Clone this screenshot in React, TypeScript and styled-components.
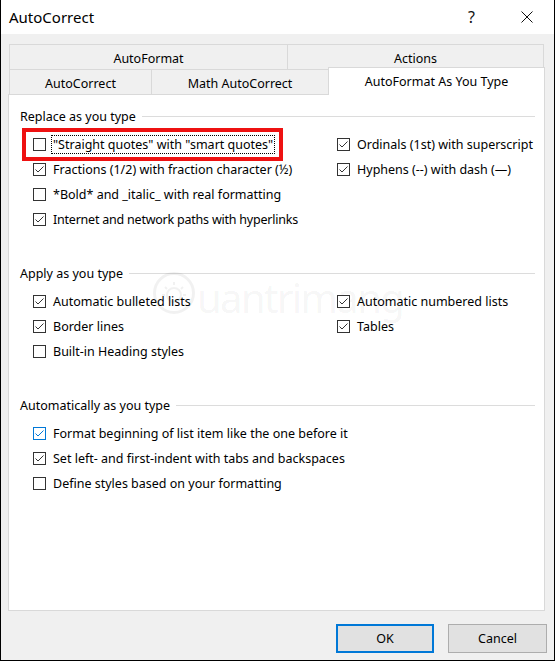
import React from 'react';
import styled, { createGlobalStyle } from 'styled-components';

const Global = createGlobalStyle`
  html, body { margin: 0; padding: 0; background: #fff; }
  * { box-sizing: border-box; }
`;

const FONT = `"Noto Sans", "Segoe UI", sans-serif`;

const Window = styled.div`
  width: 555px;
  height: 661px;
  border: 1px solid #000;
  border-top: none;
  display: flex;
  flex-direction: column;
  font-family: ${FONT};
  color: #000;
  background: #f0f0f0;
`;

const TitleBar = styled.div`
  height: 34px;
  flex: none;
  background: #fff;
  display: flex;
  align-items: center;
  padding-left: 8px;
`;

const Title = styled.div`
  flex: 1;
  font-size: 15px;
  margin-top: -1px;
`;

const TitleButton = styled.div`
  width: 55px;
  height: 34px;
  display: flex;
  align-items: center;
  justify-content: center;
  font-size: 16px;
  color: #111;
`;

const Body = styled.div`
  flex: 1;
  display: flex;
  flex-direction: column;
  padding: 10px 8px 0 7px;
`;

const TabRow = styled.div`
  display: flex;
  height: 25px;
  margin: 0 1px;
`;

const Tab = styled.div<{ $w: number; $active?: boolean; $last?: boolean }>`
  width: ${(p) => p.$w}px;
  flex: none;
  display: flex;
  align-items: center;
  justify-content: center;
  font-size: 12.5px;
  border: 1px solid #d9d9d9;
  border-bottom: none;
  border-right: ${(p) => (p.$last ? '1px solid #d9d9d9' : 'none')};
  background: ${(p) => (p.$active ? '#fff' : '#f0f0f0')};
  ${(p) =>
    p.$active
      ? `height: 28px; margin-top: -2px; margin-right: -1px; position: relative; z-index: 1; padding-bottom: 1px;`
      : `height: 25px; padding-top: 2px;`}
`;

const Panel = styled.div`
  position: relative;
  width: 537px;
  height: 517px;
  flex: none;
  background: #fff;
  border: 1px solid #d9d9d9;
  padding: 11px 9px 0 11px;
`;

const Section = styled.div<{ $gap: number }>`
  margin-top: ${(p) => p.$gap}px;
`;

const Legend = styled.div`
  height: 20px;
  display: flex;
  align-items: center;
  gap: 6px;
  font-size: 12.5px;
`;

const LegendLine = styled.div`
  flex: 1;
  height: 1px;
  background: #dcdcdc;
`;

const Columns = styled.div`
  display: grid;
  grid-template-columns: 304px 1fr;
  padding-left: 13px;
  margin-top: 6px;
`;

const Column = styled.div`
  display: flex;
  flex-direction: column;
`;

const Row = styled.div`
  position: relative;
  height: 25px;
  display: flex;
  align-items: center;
  gap: 7px;
  font-size: 12.5px;
  white-space: nowrap;
`;

const Box = styled.div<{ $focus?: boolean }>`
  width: 13px;
  height: 13px;
  flex: none;
  border: 1px solid ${(p) => (p.$focus ? '#0078d7' : '#333')};
  background: #fff;
  display: flex;
  align-items: center;
  justify-content: center;
`;

const Label = styled.span<{ $dotted?: boolean; $tight?: boolean }>`
  ${(p) => (p.$dotted ? 'outline: 1px dotted #000; outline-offset: 0; padding: 0 1px; margin-left: -1px;' : '')}
  ${(p) => (p.$tight ? 'letter-spacing: -0.22px;' : '')}
`;

const Highlight = styled.div`
  position: absolute;
  left: -11px;
  top: -4px;
  width: 261px;
  height: 33px;
  border: 4px solid #ee1111;
  pointer-events: none;
`;

const Watermark = styled.div`
  position: absolute;
  left: 143px;
  top: 176px;
  display: flex;
  align-items: flex-end;
  gap: 1px;
  color: rgba(0, 0, 0, 0.055);
  font-family: "Noto Sans", sans-serif;
  font-size: 40px;
  line-height: 40px;
  letter-spacing: -1.6px;
  pointer-events: none;
  user-select: none;
`;

const WatermarkText = styled.span`
  margin-bottom: -3px;
`;

const Footer = styled.div`
  flex: 1;
  display: flex;
  justify-content: flex-end;
  align-items: flex-start;
  gap: 14px;
  padding-top: 13px;
  margin-right: -1px;
`;

const Button = styled.div<{ $default?: boolean }>`
  width: ${(p) => (p.$default ? 98 : 99)}px;
  height: 29px;
  display: flex;
  align-items: center;
  justify-content: center;
  background: #e1e1e1;
  border: ${(p) => (p.$default ? '2px solid #0078d7' : '1px solid #adadad')};
  font-size: 12.5px;
`;

const Check = ({ color }: { color: string }) => (
  <svg width="11" height="11" viewBox="0 0 11 11">
    <polyline points="1.5,5.5 4,8 9.5,2.5" fill="none" stroke={color} strokeWidth="1" />
  </svg>
);

type Item = {
  text: string;
  checked?: boolean;
  focus?: boolean;
  dotted?: boolean;
  highlight?: boolean;
  tight?: boolean;
};

const CheckRow = ({ item }: { item: Item }) => (
  <Row>
    <Box $focus={item.focus}>{item.checked && <Check color={item.focus ? '#0078d7' : '#333'} />}</Box>
    <Label $dotted={item.dotted} $tight={item.tight}>
      {item.text}
    </Label>
    {item.highlight && <Highlight />}
  </Row>
);

const sections: { title: string; gap: number; left: Item[]; right: Item[] }[] = [
  {
    title: 'Replace as you type',
    gap: 0,
    left: [
      { text: '"Straight quotes" with "smart quotes"', dotted: true, highlight: true },
      { text: 'Fractions (1/2) with fraction character (½)', checked: true },
      { text: '*Bold* and _italic_ with real formatting' },
      { text: 'Internet and network paths with hyperlinks', checked: true, tight: true },
    ],
    right: [
      { text: 'Ordinals (1st) with superscript', checked: true },
      { text: 'Hyphens (--) with dash (—)', checked: true },
    ],
  },
  {
    title: 'Apply as you type',
    gap: 31,
    left: [
      { text: 'Automatic bulleted lists', checked: true },
      { text: 'Border lines', checked: true },
      { text: 'Built-in Heading styles' },
    ],
    right: [
      { text: 'Automatic numbered lists', checked: true },
      { text: 'Tables', checked: true },
    ],
  },
  {
    title: 'Automatically as you type',
    gap: 31,
    left: [
      { text: 'Format beginning of list item like the one before it', checked: true, focus: true },
      { text: 'Set left- and first-indent with tabs and backspaces', checked: true },
      { text: 'Define styles based on your formatting' },
    ],
    right: [],
  },
];

export default function App() {
  return (
    <>
      <Global />
      <Window>
        <TitleBar>
          <Title>AutoCorrect</Title>
          <TitleButton>?</TitleButton>
          <TitleButton>
            <svg width="12" height="12" viewBox="0 0 12 12">
              <path d="M0.5 0.5 L11.5 11.5 M11.5 0.5 L0.5 11.5" stroke="#111" strokeWidth="1" />
            </svg>
          </TitleButton>
        </TitleBar>
        <Body>
          <TabRow>
            <Tab $w={278}>AutoFormat</Tab>
            <Tab $w={257} $last>
              Actions
            </Tab>
          </TabRow>
          <TabRow>
            <Tab $w={142}>AutoCorrect</Tab>
            <Tab $w={177}>Math AutoCorrect</Tab>
            <Tab $w={217} $active $last>
              AutoFormat As You Type
            </Tab>
          </TabRow>
          <Panel>
            <Watermark aria-hidden="true">
              <svg width="44" height="44" viewBox="0 0 44 44">
                <circle cx="22" cy="22" r="19.5" fill="none" stroke="rgba(0,0,0,0.055)" strokeWidth="3" />
                <circle cx="22" cy="24" r="7" fill="none" stroke="rgba(0,0,0,0.055)" strokeWidth="2" />
                <path
                  d="M22 11 V14 M13 16 L15 18 M31 16 L29 18 M10 24 H13 M34 24 H31"
                  stroke="rgba(0,0,0,0.055)"
                  strokeWidth="2"
                />
              </svg>
              <WatermarkText>uantrimang</WatermarkText>
            </Watermark>
            {sections.map((s) => (
              <Section key={s.title} $gap={s.gap}>
                <Legend>
                  <span>{s.title}</span>
                  <LegendLine />
                </Legend>
                <Columns>
                  <Column>
                    {s.left.map((it) => (
                      <CheckRow key={it.text} item={it} />
                    ))}
                  </Column>
                  <Column>
                    {s.right.map((it) => (
                      <CheckRow key={it.text} item={it} />
                    ))}
                  </Column>
                </Columns>
              </Section>
            ))}
          </Panel>
          <Footer>
            <Button $default>OK</Button>
            <Button>Cancel</Button>
          </Footer>
        </Body>
      </Window>
    </>
  );
}
